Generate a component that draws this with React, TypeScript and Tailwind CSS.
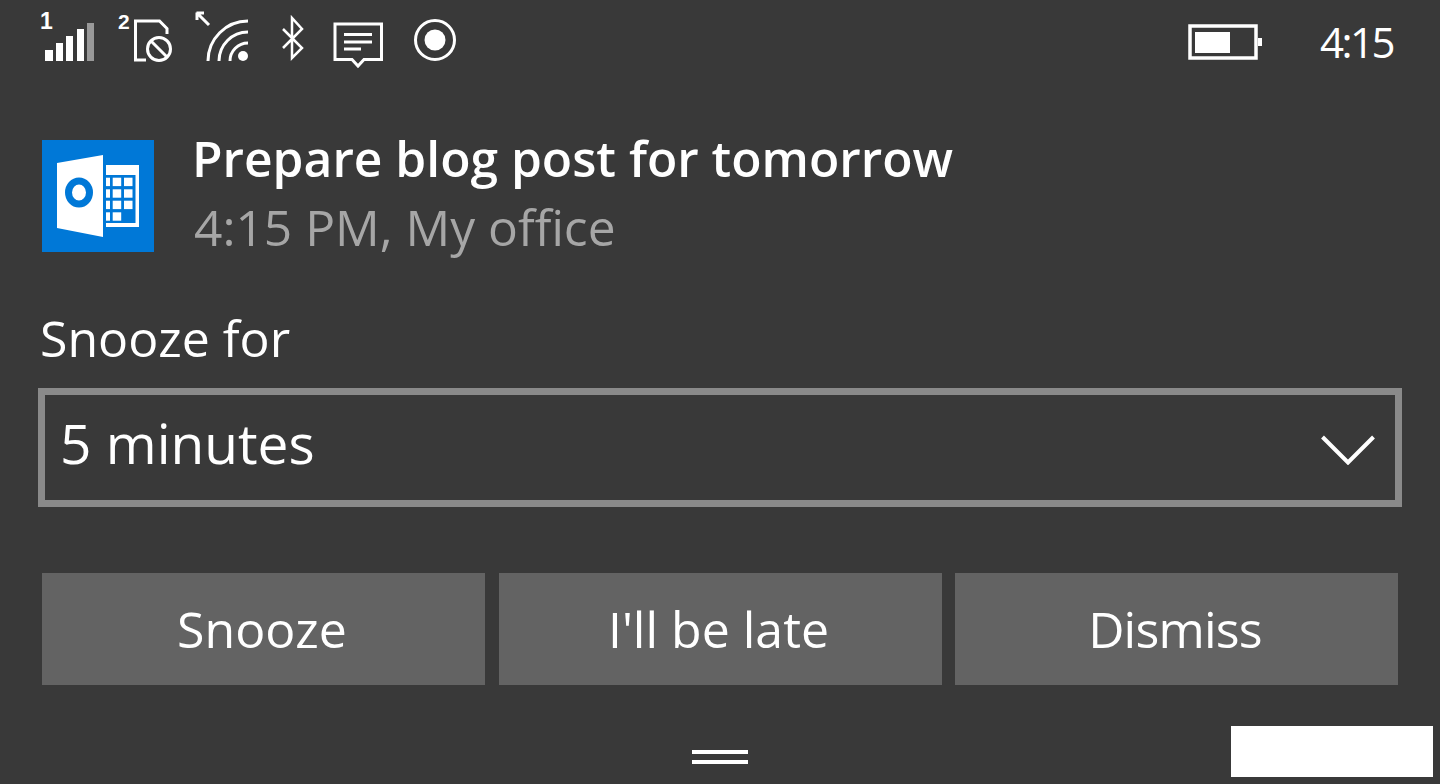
const font = { fontFamily: '"Open Sans", "Noto Sans", sans-serif' };

function SignalIcon() {
  return (
    <svg width="58" height="80" viewBox="38 0 58 80" fill="#fff">
      <text x="40" y="29" fontSize="23" fontWeight="700" fontFamily="Liberation Sans, sans-serif">1</text>
      <rect x="45" y="50" width="8" height="11" />
      <rect x="56" y="43" width="7" height="18" />
      <rect x="66" y="36" width="7" height="25" />
      <rect x="77" y="29" width="7" height="32" />
      <rect x="87" y="23" width="7" height="38" fill="#999" />
    </svg>
  );
}

function SimIcon() {
  return (
    <svg width="55" height="80" viewBox="118 0 55 80" fill="none" stroke="#fff" strokeWidth="3">
      <text x="118" y="29" fontSize="21" fontWeight="700" fill="#fff" stroke="none" fontFamily="Liberation Sans, sans-serif">2</text>
      <path d="M146 60H135.500V21H159.500L167 28.500V34" />
      <circle cx="159" cy="49" r="11.500" />
      <path d="M151 41L167 57" />
    </svg>
  );
}

function WifiIcon() {
  return (
    <svg width="55" height="80" viewBox="195 0 55 80" fill="none" stroke="#fff" strokeWidth="3">
      <path d="M197 13L209 25M197 12.500V20M196.500 13H204" />
      <path d="M208 61A40 40 0 0 1 248 21" />
      <path d="M219 61A29 29 0 0 1 248 32" />
      <path d="M230 61A18 18 0 0 1 248 43" />
      <circle cx="243" cy="56" r="5" fill="#fff" stroke="none" />
    </svg>
  );
}

function BluetoothIcon() {
  return (
    <svg width="25" height="80" viewBox="280 0 25 80" fill="none" stroke="#fff" strokeWidth="2.500">
      <path d="M283 29L302 48L292 58V18L302 29L283 48" />
    </svg>
  );
}

function MessageIcon() {
  return (
    <svg width="52" height="80" viewBox="332 0 52 80" fill="none" stroke="#fff" strokeWidth="3">
      <path d="M335 24H381.500V59.500H364L358 66L352 59.500H335Z" />
      <path d="M344 34.500H372M344 42H372M344 49H361" />
    </svg>
  );
}

function RecordIcon() {
  return (
    <svg width="45" height="80" viewBox="413 0 45 80" fill="none" stroke="#fff" strokeWidth="3">
      <circle cx="435" cy="40" r="19.500" />
      <circle cx="435" cy="40" r="10.500" fill="#fff" stroke="none" />
    </svg>
  );
}

function BatteryIcon() {
  return (
    <svg width="74" height="80" viewBox="1188 0 74 80" fill="#fff">
      <rect x="1190" y="26" width="66" height="32" fill="none" stroke="#fff" strokeWidth="3.500" />
      <rect x="1195" y="32" width="35" height="21" />
      <rect x="1258" y="38" width="4" height="8" />
    </svg>
  );
}

function OutlookLogo() {
  const cols = [106, 112.7, 124];
  const rows = [177.7, 189.3, 200.7, 212.3];
  return (
    <svg width="112" height="112" viewBox="42 140 112 112" className="shrink-0">
      <rect x="42" y="140" width="112" height="112" fill="#0078d7" />
      <rect x="106" y="165" width="33" height="62" fill="#fff" />
      <rect x="106" y="175" width="29.500" height="48" fill="#0078d7" />
      {rows.map((y, r) =>
        cols.map((x, c) =>
          r === 3 && c === 2 ? null : (
            <rect key={`${r}-${c}`} x={x} y={y} width={c === 0 ? 4 : 8.500} height="8.400" fill="#fff" />
          )
        )
      )}
      <path d="M57 163L103 155V237L57 228Z" fill="#fff" />
      <ellipse cx="79" cy="192.500" rx="10.500" ry="11.500" fill="none" stroke="#0078d7" strokeWidth="7" />
    </svg>
  );
}

function ActionButton({ label, className = "" }: { label: string; className?: string }) {
  return (
    <button className={"flex-1 h-[112px] pr-[3px] bg-[#636363] text-white text-[50px] " + className} style={font}>
      {label}
    </button>
  );
}

export default function App() {
  return (
    <div className="relative w-[1440px] h-[784px] overflow-hidden bg-[#393939] text-white" style={font}>
      {/* Status bar */}
      <div className="flex h-[80px] pl-[38px] pr-[45px]">
        <SignalIcon />
        <div className="ml-[22px] flex">
          <SimIcon />
        </div>
        <div className="ml-[22px] flex">
          <WifiIcon />
        </div>
        <div className="ml-[30px] flex">
          <BluetoothIcon />
        </div>
        <div className="ml-[27px] flex">
          <MessageIcon />
        </div>
        <div className="ml-[29px] flex">
          <RecordIcon />
        </div>
        <div className="ml-auto flex">
          <BatteryIcon />
        </div>
        <span className="ml-[58px] w-[75px] h-[80px] pr-[2px] text-right text-[42px] tracking-[-2.500px] leading-[84px] whitespace-nowrap">4:15</span>
      </div>

      {/* Reminder */}
      <div className="flex mt-[60px] pl-[42px]">
        <OutlookLogo />
        <div className="ml-[38px]">
          <p className="text-[49.700px] leading-[66px] font-semibold mt-[-15px]">Prepare blog post for tomorrow</p>
          <p className="text-[49.700px] leading-[66px] mt-[3px] ml-[2px] text-[#a6a6a6]">4:15 PM, My office</p>
        </div>
      </div>

      {/* Snooze picker */}
      <p className="text-[50px] leading-[64px] mt-[46px] pl-[40px]">Snooze for</p>
      <div className="mx-[38px] mt-[18px] h-[119px] border-[7px] border-[#8a8a8a] flex items-center justify-between pl-[15px] pr-[20px]">
        <span className="text-[55px] mb-[8px]">5 minutes</span>
        <svg width="54" height="30" viewBox="0 0 54 30" fill="none" stroke="#fff" strokeWidth="4" className="mt-[5px]">
          <path d="M1.500 2L27 27.500L52.500 2" />
        </svg>
      </div>

      {/* Actions */}
      <div className="flex gap-[13.500px] mx-[42px] mt-[66px]">
        <ActionButton label="Snooze" />
        <ActionButton label="I'll be late" />
        <ActionButton label="Dismiss" className="tracking-[-0.800px]" />
      </div>

      {/* Handle */}
      <div className="flex flex-col items-center gap-[6px] mt-[65px]">
        <div className="w-[56px] h-[4px] bg-white" />
        <div className="w-[56px] h-[4px] bg-white" />
      </div>

      {/* White block over the corner */}
      <div className="absolute left-[1231px] top-[726px] w-[202px] h-[51px] bg-white" />
    </div>
  );
}
